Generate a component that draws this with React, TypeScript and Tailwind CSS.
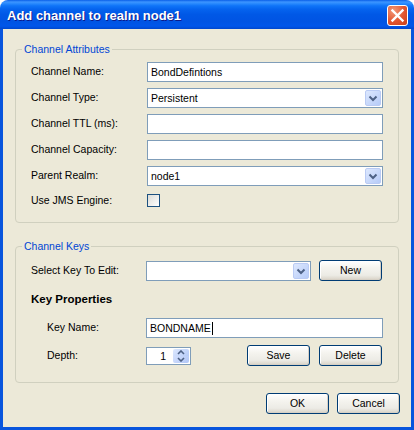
import type { ReactNode } from 'react'

const font = "font-['Liberation_Sans',Arial,sans-serif]"

function ChevronDown() {
  return (
    <svg width="14" height="14" viewBox="0 0 14 14">
      <path d="M3.5 5.5 L7 9 L10.5 5.5" fill="none" stroke="#4D6185" strokeWidth="2" />
    </svg>
  )
}

function Combo({ value = '', className = '' }: { value?: string; className?: string }) {
  return (
    <div className={`flex h-[20px] border border-[#7F9DB9] bg-white ${className}`}>
      <span className="flex-1 pl-[3px] leading-[18px] text-black">{value}</span>
      <div className="m-px flex w-[16px] items-center justify-center rounded-[2px] border border-[#BACBF4] bg-[linear-gradient(135deg,#DDE8FE,#B6CBF8)]">
        <ChevronDown />
      </div>
    </div>
  )
}

function TextField({ value = '', cursor = false, className = '' }: { value?: string; cursor?: boolean; className?: string }) {
  return (
    <div className={`flex h-[20px] items-center border border-[#7F9DB9] bg-white pl-[3px] ${className}`}>
      <span className="leading-[18px] text-black">{value}</span>
      {cursor && <span className="ml-px h-[13px] w-px bg-black" />}
    </div>
  )
}

function XpButton({ children, className = '' }: { children: ReactNode; className?: string }) {
  return (
    <button className={`flex h-[21px] w-[63px] items-center justify-center rounded-[3px] border border-[#003C74] bg-[linear-gradient(to_bottom,#FFFFFF,#F5F4EF_35%,#ECEBE5_75%,#D8D2C6)] text-black shadow-[inset_-1px_-1px_0_#D6D0C5,inset_1px_1px_0_#FFFFFF] ${className}`}>
      {children}
    </button>
  )
}

function Spinner() {
  return (
    <div className="flex h-[18px] w-[45px] border border-[#7F9DB9] bg-white">
      <span className="flex-1 pr-[6px] text-right leading-[16px] text-black">1</span>
      <div className="m-px flex w-[16px] flex-col">
        <div className="flex flex-1 items-center justify-center rounded-t-[2px] bg-[linear-gradient(135deg,#DDE8FE,#B6CBF8)]">
          <svg width="8" height="5" viewBox="0 0 8 5">
            <path d="M1 4 L4 1 L7 4" fill="none" stroke="#4D6185" strokeWidth="1.6" />
          </svg>
        </div>
        <div className="flex flex-1 items-center justify-center rounded-b-[2px] bg-[linear-gradient(135deg,#D3E0FD,#B1C6F6)]">
          <svg width="8" height="5" viewBox="0 0 8 5">
            <path d="M1 1 L4 4 L7 1" fill="none" stroke="#4D6185" strokeWidth="1.6" />
          </svg>
        </div>
      </div>
    </div>
  )
}

function Row({ label, children }: { label: string; children: ReactNode }) {
  return (
    <div className="flex h-[20px] items-center">
      <span className="w-[116px] shrink-0">{label}</span>
      {children}
    </div>
  )
}

export default function App() {
  return (
    <div className={`${font} h-[430px] w-[414px] bg-white text-[10.5px] text-black`}>
      {/* title bar */}
      <div className="flex h-[29px] items-center justify-between rounded-t-[8px] bg-[linear-gradient(to_bottom,#0A5FE8_0%,#3D95FF_7%,#2A8AFD_12%,#0F74F8_20%,#0563EE_32%,#0058E6_50%,#0054E3_75%,#0056EA_90%,#0047CD_100%)] pl-[7px] pr-[6px] pt-[2px]">
        <span className="text-[13px] font-bold text-white [text-shadow:1px_1px_#0C1A8A]">Add channel to realm node1</span>
        <div className="flex h-[21px] w-[21px] items-center justify-center rounded-[3px] border border-white bg-[radial-gradient(circle_at_30%_25%,#F29878,#E2552F_55%,#C8411C)]">
          <svg width="19" height="19" viewBox="0 0 19 19">
            <path d="M4.5 4.5 L14.5 14.5 M14.5 4.5 L4.5 14.5" stroke="#FFFFFF" strokeWidth="2.4" strokeLinecap="square" />
          </svg>
        </div>
      </div>

      {/* body */}
      <div className="flex h-[401px] flex-col border-x-[3px] border-b-[3px] border-[#0855DD] bg-[#ECE9D8]">
        <fieldset className="mx-[12px] mt-[13px] rounded-[4px] border border-[#D0D0BF] p-0">
          <legend className="ml-[6px] px-[2px] leading-[14px] text-[#0046D5]">Channel Attributes</legend>
          <div className="flex flex-col gap-[6px] pb-[13px] pl-[15px] pr-[15px] pt-[6px]">
            <Row label="Channel Name:">
              <TextField value="BondDefintions" className="flex-1" />
            </Row>
            <Row label="Channel Type:">
              <Combo value="Persistent" className="flex-1" />
            </Row>
            <Row label="Channel TTL (ms):">
              <TextField className="flex-1" />
            </Row>
            <Row label="Channel Capacity:">
              <TextField className="flex-1" />
            </Row>
            <Row label="Parent Realm:">
              <Combo value="node1" className="flex-1" />
            </Row>
            <div className="flex h-[17px] items-center">
              <span className="w-[116px] shrink-0">Use JMS Engine:</span>
              <div className="h-[13px] w-[13px] border border-[#1C5180] bg-[linear-gradient(135deg,#DCDCD7,#FFFFFF)]" />
            </div>
          </div>
        </fieldset>

        <fieldset className="mx-[12px] mt-[16px] rounded-[4px] border border-[#D0D0BF] p-0">
          <legend className="ml-[6px] px-[2px] leading-[14px] text-[#0046D5]">Channel Keys</legend>
          <div className="flex flex-col pb-[16px] pl-[15px] pr-[15px] pt-[7px]">
            <div className="flex h-[21px] items-center">
              <span className="w-[115px] shrink-0">Select Key To Edit:</span>
              <Combo className="w-[165px]" />
              <XpButton className="ml-[8px] mr-px">New</XpButton>
            </div>
            <div className="mt-[12px] flex h-[14px] items-center text-[11.5px] font-bold">Key Properties</div>
            <div className="mt-[11px] flex h-[20px] items-center">
              <span className="ml-[16px] w-[99px] shrink-0">Key Name:</span>
              <TextField value="BONDNAME" cursor className="flex-1" />
            </div>
            <div className="mt-[7px] flex h-[21px] items-center">
              <span className="ml-[16px] w-[99px] shrink-0">Depth:</span>
              <Spinner />
              <div className="flex-1" />
              <XpButton className="w-[62px]">Save</XpButton>
              <XpButton className="ml-[9px] mr-px">Delete</XpButton>
            </div>
          </div>
        </fieldset>

        <div className="mt-[10px] flex justify-end gap-[8px] pr-[11px]">
          <XpButton>OK</XpButton>
          <XpButton>Cancel</XpButton>
        </div>
      </div>
    </div>
  )
}
